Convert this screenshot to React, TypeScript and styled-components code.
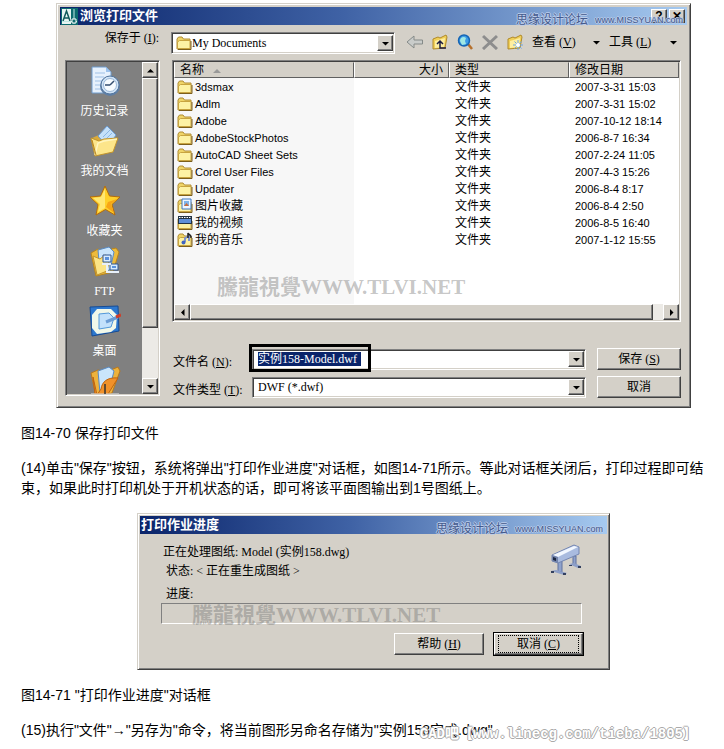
import React from "react";
import styled, { createGlobalStyle, css } from "styled-components";

const GlobalStyle = createGlobalStyle`
  *, *::before, *::after { box-sizing: border-box; }
  body { margin: 0; background: #fff; color: #000; }
  button, input, select { font: inherit; color: inherit; margin: 0; border-radius: 0; }
`;

const ui = `"Liberation Serif", "Noto Sans CJK SC", serif`;
const sans = `"Liberation Sans", "Noto Sans CJK SC", sans-serif`;
const face = "#d4d0c8";

const raised = css`
  border: 1px solid;
  border-color: #fff #404040 #404040 #fff;
  box-shadow: inset -1px -1px 0 #808080;
`;
const sunken = css`
  padding: 1px;
  border: 1px solid;
  border-color: #808080 #fff #fff #808080;
  box-shadow: inset 1px 1px 0 #404040, inset -1px -1px 0 ${face};
`;

const Article = styled.main`
  display: flex;
  flex-direction: column;
  gap: 15px;
  padding: 3px 12px 10px 21px;
  font: 14px/20px ${sans};
`;
const Paragraph = styled.p`
  position: relative;
  margin: 0;
`;
const Figure = styled.figure<{ $max: number }>`
  width: 100%;
  max-width: ${(p) => p.$max + 14}px;
  margin: 0 auto;
  padding-left: 14px;
`;
const Dialog = styled.section`
  padding: 2px;
  background: ${face};
  border: 1px solid;
  border-color: ${face} #404040 #404040 ${face};
  box-shadow: inset 1px 1px 0 #fff, inset -1px -1px 0 #808080;
  font: 12px/16px ${ui};
`;
const DialogFrame = styled.div`
  border: 1px solid ${face};
`;
const TitleBar = styled.header`
  position: relative;
  display: flex;
  align-items: center;
  gap: 2px;
  height: 18px;
  padding: 0 2px 0 1px;
  background: linear-gradient(90deg, #0a246a, #3f62a5 45%, #a6caf0);
`;
const Title = styled.h2`
  flex: 1;
  margin: 0;
  color: #fff;
  font: bold 13px/18px ${sans};
`;
const CaptionButton = styled.button`
  width: 16px;
  height: 14px;
  padding: 0;
  background: ${face};
  font: bold 12px/12px ${sans};
  ${raised}
`;
const SiteMark = styled.span`
  position: absolute;
  right: 4px;
  bottom: -4px;
  display: flex;
  align-items: center;
  gap: 7px;
  color: #44598c;
  font: 12px/18px ${sans};
  text-shadow: 1px 0 #bccdea, -1px 0 #bccdea, 0 1px #bccdea, 0 -1px #bccdea;
  pointer-events: none;
`;
const SiteUrl = styled.small`
  font: 9px/18px ${sans};
`;
const Watermark = styled.div<{ $left: number; $bottom: number }>`
  position: absolute;
  left: ${(p) => p.$left}px;
  bottom: ${(p) => p.$bottom}px;
  color: rgba(110, 110, 110, 0.4);
  font: bold 21px/24px "Liberation Serif", "Noto Sans CJK TC", serif;
  white-space: nowrap;
  pointer-events: none;
`;

const BrowseBody = styled.div`
  padding: 7px 6px 6px 5px;
`;
const Toolbar = styled.div`
  display: flex;
  align-items: flex-start;
  margin-bottom: 6px;
`;
const LookInLabel = styled.label`
  width: 94px;
  margin-right: 12px;
  line-height: 12px;
  text-align: right;
`;
const Combo = styled.div`
  display: flex;
  align-items: center;
  flex: 1;
  min-width: 0;
  height: 22px;
  background: #fff;
  ${sunken}
  padding-left: 4px;
`;
const FieldCombo = styled(Combo)`
  position: relative;
  height: 21px;
  padding-left: 5px;
`;
const PlainSelect = styled.select`
  flex: 1;
  min-width: 0;
  height: 16px;
  padding: 0;
  border: 0;
  outline: 0;
  background: transparent;
  appearance: none;
`;
const NameInput = styled.input`
  width: 103px;
  height: 14px;
  padding: 0;
  border: 0;
  outline: 0;
  background: #0a246a;
  color: #fff;
`;
const Grow = styled.span`
  flex: 1;
`;
const ArrowButton = styled.button`
  display: grid;
  place-items: center;
  flex: none;
  width: 16px;
  height: 16px;
  padding: 0;
  background: ${face};
  ${raised}
`;
const Highlight = styled.div`
  position: absolute;
  top: -6px;
  left: -4px;
  width: 122px;
  height: 28px;
  border: 3px solid #000;
  pointer-events: none;
`;
const Tools = styled.div`
  display: flex;
  align-items: center;
  padding-left: 7px;
`;
const ToolButton = styled.button`
  display: grid;
  place-items: center;
  width: 25px;
  height: 20px;
  padding: 0;
  border: 0;
  background: none;
`;
const MenuButton = styled.button`
  display: flex;
  align-items: center;
  justify-content: space-between;
  width: 68px;
  margin: 0 4px 0 5px;
  padding: 0;
  border: 0;
  background: none;
  white-space: nowrap;
`;

const Main = styled.div`
  display: flex;
  gap: 12px;
`;
const Places = styled.nav`
  display: flex;
  flex: none;
  width: 95px;
  margin-bottom: 2px;
  background: #808080;
  ${sunken}
`;
const PlaceList = styled.div`
  flex: 1;
  overflow: hidden;
  contain: size;
`;
const Place = styled.button`
  display: flex;
  flex-direction: column;
  align-items: center;
  gap: 6px;
  width: 100%;
  height: 60px;
  padding: 3px 0;
  border: 0;
  background: none;
  color: #fff;
`;
const VScroll = styled.div`
  display: flex;
  flex-direction: column;
  width: 16px;
  background: #eceae6;
`;
const HScroll = styled.div`
  display: flex;
  height: 16px;
  background: #eceae6;
`;
const Thumb = styled.div<{ $grow: number }>`
  flex: ${(p) => p.$grow};
  background: ${face};
  ${raised}
`;
const Track = styled.div<{ $grow: number }>`
  flex: ${(p) => p.$grow};
`;

const Content = styled.div`
  flex: 1;
  min-width: 0;
`;
const FileList = styled.div`
  position: relative;
  ${sunken}
`;
const Viewport = styled.div`
  min-height: 242px;
  background: linear-gradient(90deg, #f7f7f7 180px, #fff 180px);
`;
const FileTable = styled.table`
  width: 100%;
  table-layout: fixed;
  border-collapse: separate;
  border-spacing: 0;
  text-align: left;
`;
const HeadCell = styled.th<{ $width?: number; $right?: boolean }>`
  width: ${(p) => (p.$width ? p.$width + "px" : "auto")};
  height: 16px;
  padding: 0 5px;
  background: ${face};
  border: 1px solid;
  border-color: ${face} #606060 #606060 #fff;
  font-weight: normal;
  line-height: 14px;
  text-align: ${(p) => (p.$right ? "right" : "left")};
`;
const SortMark = styled.span`
  display: inline-block;
  margin-left: 9px;
  vertical-align: middle;
  border: 4px solid transparent;
  border-top: 0;
  border-bottom-color: #999;
`;
const Cell = styled.td<{ $small?: boolean }>`
  height: 17px;
  padding: 0 6px;
  font: ${(p) => (p.$small ? 11 : 12)}px/16px ${sans};
  white-space: nowrap;
`;
const FileName = styled.span`
  display: flex;
  align-items: center;
  gap: 2px;
  margin-left: -3px;
`;

const Fields = styled.div`
  display: grid;
  grid-template-columns: 69px 1fr 84px;
  column-gap: 11px;
  row-gap: 6px;
  align-items: center;
  margin-top: 26px;
`;
const FieldLabel = styled.label`
  padding: 5px 0 0 1px;
  white-space: nowrap;
`;
const PushButton = styled.button<{ $default?: boolean }>`
  height: 22px;
  padding: 0;
  background: ${face};
  line-height: 16px;
  ${raised}
  ${(p) =>
    p.$default &&
    css`
      outline: 1px solid #000;
    `}
`;
const FocusBox = styled.span`
  display: block;
  margin: 0 3px;
  border: 1px dotted #000;
`;

const ProgressBody = styled.div`
  padding: 10px 25px 12px 21px;
`;
const StatusRow = styled.div`
  display: flex;
  align-items: flex-start;
  justify-content: space-between;
  padding-left: 2px;
`;
const StatusLine = styled.p<{ $indent?: number }>`
  margin: 0 0 3px ${(p) => p.$indent ?? 0}px;
`;
const ProgressLabel = styled.div`
  margin: 4px 0 1px 5px;
`;
const ProgressBar = styled.div`
  position: relative;
  height: 21px;
  border: 1px solid;
  border-color: #808080 #fff #fff #808080;
`;
const Actions = styled.div`
  display: grid;
  grid-template-columns: 90px 89px;
  justify-content: end;
  gap: 10px;
  margin: 9px -1px 0 0;
`;
const ForumMark = styled.span`
  position: absolute;
  right: 15px;
  top: 4px;
  color: #fff;
  font: bold 14px/20px "Liberation Mono", "Noto Sans CJK SC", monospace;
  text-shadow: 1px 0 #aaa, -1px 0 #aaa, 0 1px #aaa, 0 -1px #aaa;
  white-space: nowrap;
  pointer-events: none;
`;

type Dir = "up" | "down" | "left" | "right";
const arrows: Record<Dir, string> = {
  up: "M0 5.5h7L3.5 2z",
  down: "M0 2h7L3.5 5.5z",
  left: "M5.5 0v7L2 3.5z",
  right: "M2 0v7l3.5-3.5z",
};
const Arrow = ({ dir = "down" }: { dir?: Dir }) => (
  <svg width="7" height="7" aria-hidden="true">
    <path d={arrows[dir]} />
  </svg>
);

const FolderShape = () => (
  <>
    <path d="M1 4l1.500-2H6l1.500 2H14v10H1z" fill="#efd468" stroke="#b08c34" />
    <path d="M1.500 13.500V7l2-1.500H14v8z" fill="#fdf2a4" stroke="#c8a440" />
    <path d="M15 6v8.500H2" stroke="#7c5f1c" fill="none" />
  </>
);

type Kind = "folder" | "picture" | "video" | "music";
const FileIcon = ({ kind }: { kind: Kind }) => (
  <svg width="16" height="16" viewBox="0 0 16 16" aria-hidden="true">
    <FolderShape />
    {kind === "picture" && (
      <>
        <path d="M5 1h9v10H5z" fill="#eef6ff" stroke="#3f78c0" />
        <path d="M7 3h5v5H7z" fill="#7fb4ea" />
        <path d="M7 8l2.500-3L12 8z" fill="#c66a3c" />
      </>
    )}
    {kind === "video" && (
      <>
        <path d="M1 1h14v8H1z" fill="#234" />
        <path d="M2 2.500h12" stroke="#fff" strokeDasharray="1.500 1" />
        <path d="M2 4h12v4H2z" fill="#5e8fd8" />
      </>
    )}
    {kind === "music" && (
      <>
        <path d="M8 10V6l4-2v5" stroke="#7f93cc" strokeWidth="2" fill="none" />
        <circle cx="6.500" cy="10.500" r="2" fill="#4064c0" />
        <path d="M11 6V1c1 2 4 2 3 5" stroke="#222" strokeWidth="1.500" fill="none" />
      </>
    )}
  </svg>
);

const AppIcon = () => (
  <svg width="17" height="17" viewBox="0 0 17 17" aria-hidden="true">
    <path d="M0 0h17v17H0z" fill="#0c6a6e" />
    <path d="M1 1h9v15H1z" fill="#e8f4f2" />
    <path d="M2 13L5.500 3 9 13M3 10h5" stroke="#10595c" strokeWidth="1.500" fill="none" />
    <path d="M13 1v15M1 13.500h15" stroke="#bfe8e4" />
    <path d="M11 11h4v4h-4z" fill="#0c6a6e" stroke="#fff" />
  </svg>
);

const HistoryIcon = () => (
  <>
    <path d="M3 2h14l5 5v21H3z" fill="#e6f1fd" stroke="#6f9cce" />
    <path d="M17 2v5h5z" fill="#9dc2ec" />
    <path d="M6 8h10M6 12h9M6 16h7M6 20h5M6 24h6" stroke="#9fc0e6" />
    <circle cx="21" cy="21" r="10" fill="#5f7fa6" />
    <circle cx="21" cy="20" r="9" fill="#cfe2f5" stroke="#55779e" />
    <circle cx="21" cy="20" r="6.500" fill="#f6fbff" stroke="#9ab8d8" />
    <path d="M21 20l4-4M21 20h-5" stroke="#334e70" strokeWidth="1.500" />
  </>
);
const DocumentsIcon = () => (
  <>
    <path d="M3 13l9-4 16 4-5 9z" fill="#d9a93a" />
    <path d="M9 11L18 1l9 9-8 12z" fill="#c4e0fa" stroke="#6c9cd2" />
    <path d="M14 12l7-7M16 15l7-7" stroke="#8ab6e4" />
    <path d="M2 13l8 3 5-2 14-1-5 14-18 4z" fill="#fce58a" stroke="#c4952a" />
    <path d="M6 30l3-12 6-2 13-2" fill="none" stroke="#fff5bf" strokeWidth="1.500" />
    <path d="M3 15l4 15" stroke="#b8841d" />
  </>
);
const StarIcon = () => (
  <>
    <path d="M16 1l4.500 10L31 12l-8 7.500L26 30l-9.500-5.500L7 30l2-10.500L1 12l10.500-1z" fill="#ffd02a" stroke="#b46b0c" />
    <path d="M16 4v19L9 27l2-8-7-6 8-1z" fill="#ffef8e" opacity=".75" />
    <path d="M17 22l8 6-3-9 6-5-9 3z" fill="#f59a12" opacity=".8" />
  </>
);
const FtpIcon = () => (
  <>
    <path d="M2 8l7-4 5 2 13-3 3 4-6 20-17 4z" fill="#edbb3c" stroke="#b9851c" />
    <path d="M9 5l11-3 5 5-4 18-10 2z" fill="#cae5fb" stroke="#598bc4" />
    <path d="M4 11l7 3 5-4 5 2-3 14-10 4z" fill="#fbe486" stroke="#c4962e" />
    <path d="M14 10h8v7h-8zM21 19h8v6h-8z" fill="#d8ecff" stroke="#31568f" />
    <path d="M13 19h9M19 27h11M18 19v8h3" stroke="#e8f0fa" strokeWidth="2" fill="none" />
    <path d="M16 12h4v3h-4zM23 21h4v2h-4z" fill="#5b92dc" />
  </>
);
const DesktopIcon = () => (
  <>
    <path d="M1 2l28-1 1 25-27 5z" fill="#2d78cf" stroke="#164b94" />
    <path d="M8 4h14l6 6-1 13-5 4-14 2-5-6V10z" fill="#f1f8ea" />
    <path d="M10 9l10-1 5 5-3 9-12 2z" fill="#c2e1fb" stroke="#5299da" />
    <path d="M17 17l12-5" stroke="#6a9cd4" strokeWidth="3" />
    <path d="M27 12l5-2" stroke="#cf3d28" strokeWidth="3" />
  </>
);
const BuzzsawIcon = () => (
  <>
    <path d="M2 8l7-3 8 2 12-5 2 4-8 22-16 4z" fill="#edb23c" stroke="#b9781c" />
    <path d="M9 6l11-4 5 4-5 20-9 2z" fill="#cae5fb" stroke="#598bc4" />
    <path d="M4 12l4 18 4-6c1-7 6-12 17-11L19 29H6z" fill="#f0912a" stroke="#bd6412" />
    <path d="M2 29h28" stroke="#e8e8e8" />
    <path d="M16 19v10" stroke="#333" strokeWidth="1.500" />
  </>
);

const places: [string, () => React.ReactElement][] = [
  ["历史记录", HistoryIcon],
  ["我的文档", DocumentsIcon],
  ["收藏夹", StarIcon],
  ["FTP", FtpIcon],
  ["桌面", DesktopIcon],
  ["Buzzsaw", BuzzsawIcon],
];

const files: [string, string, Kind][] = [
  ["3dsmax", "2007-3-31 15:03", "folder"],
  ["Adlm", "2007-3-31 15:02", "folder"],
  ["Adobe", "2007-10-12 18:14", "folder"],
  ["AdobeStockPhotos", "2006-8-7 16:34", "folder"],
  ["AutoCAD Sheet Sets", "2007-2-24 11:05", "folder"],
  ["Corel User Files", "2007-4-3 15:26", "folder"],
  ["Updater", "2006-8-4 8:17", "folder"],
  ["图片收藏", "2006-8-4 2:50", "picture"],
  ["我的视频", "2006-8-5 16:40", "video"],
  ["我的音乐", "2007-1-12 15:55", "music"],
];

const toolIcons: [string, React.ReactNode][] = [
  ["后退", <path key="a" d="M0 8l7-6v4h8.500v4H7v4z" fill="#c9ccca" stroke="#858a88" />],
  [
    "向上一级",
    <g key="b">
      <path d="M1 5l5-2 2 1 6-3 1 2-2 11-12 1z" fill="#f0cf58" stroke="#b08a2a" />
      <path d="M3 7l10-3-1 9-9 1z" fill="#fdeea0" />
      <path d="M14 14H8V7M5 10l3-3 3 3" stroke="#1c1c40" strokeWidth="1.500" fill="none" />
    </g>,
  ],
  [
    "搜索 Web",
    <g key="c">
      <path d="M11 10l4 5" stroke="#b5702c" strokeWidth="2.500" />
      <circle cx="7" cy="6.500" r="5.500" fill="#3c9be6" stroke="#1565b4" strokeWidth="1.500" />
      <path d="M3 7c0-4 4-5 6-3L8 7l1 3-4 1z" fill="#9fe8e4" />
    </g>,
  ],
  ["删除", <path key="d" d="M1 2l14 13M15 2L1 15" stroke="#8d8d8d" strokeWidth="3" />],
  [
    "新建文件夹",
    <g key="e">
      <path d="M1 5l5-2 2 1 6-3 1 2-2 11-12 1z" fill="#f0cf58" stroke="#b08a2a" />
      <path d="M3 7l10-3-1 9-9 1z" fill="#fdeea0" />
      <path d="M11 6v10M6 11h10M7.500 7.500l7 7M14.500 7.500l-7 7" stroke="#6aa6e4" />
      <circle cx="11" cy="11" r="2" fill="#fff" />
    </g>,
  ],
];

const PlotterIcon = () => (
  <svg width="32" height="32" viewBox="0 0 32 32" aria-hidden="true">
    <path d="M8 17h4v11H8zM23 12h3v9h-3z" fill="#8fa2cc" stroke="#60739f" />
    <path d="M1 27l5-1 11 3-3 2zM19 20l5-1 7 3-3 2z" fill="#8d9fc8" />
    <path d="M1 27h3v2H1zM13 29h3v2h-3zM19 21h3v1h-3zM28 22h3v2h-3z" fill="#33405f" />
    <path d="M2 11L24 1l5 2v7L8 19l-6-2z" fill="#a9bbdf" stroke="#7587b2" />
    <path d="M3 11L24 2l4 1L8 13z" fill="#f2f7ff" />
    <path d="M2 11l6 2v6l-6-2z" fill="#7283aa" />
    <path d="M3 13l3 1v3l-3-1z" fill="#1b2743" />
  </svg>
);

const SiteBadge = () => (
  <SiteMark>
    思缘设计论坛<SiteUrl>www.MISSYUAN.com</SiteUrl>
  </SiteMark>
);

export default function App() {
  return (
    <Article>
      <GlobalStyle />
      <Figure $max={635}>
        <Dialog aria-label="浏览打印文件">
          <DialogFrame>
            <TitleBar>
              <AppIcon />
              <Title>浏览打印文件</Title>
              <CaptionButton aria-label="帮助">?</CaptionButton>
              <CaptionButton aria-label="关闭">✕</CaptionButton>
              <SiteBadge />
            </TitleBar>
            <BrowseBody>
              <Toolbar>
                <LookInLabel htmlFor="look-in">
                  保存于 (<u>I</u>):
                </LookInLabel>
                <Combo>
                  <FileIcon kind="folder" />
                  <PlainSelect id="look-in">
                    <option>My Documents</option>
                  </PlainSelect>
                  <ArrowButton tabIndex={-1} aria-label="展开位置">
                    <Arrow />
                  </ArrowButton>
                </Combo>
                <Tools>
                  {toolIcons.map(([name, drawing]) => (
                    <ToolButton key={name} aria-label={name}>
                      <svg width="16" height="16" viewBox="0 0 16 16" fill="none">
                        {drawing}
                      </svg>
                    </ToolButton>
                  ))}
                  <MenuButton>
                    <span>
                      查看 (<u>V</u>)
                    </span>
                    <Arrow />
                  </MenuButton>
                  <MenuButton>
                    <span>
                      工具 (<u>L</u>)
                    </span>
                    <Arrow />
                  </MenuButton>
                </Tools>
              </Toolbar>
              <Main>
                <Places aria-label="位置">
                  <PlaceList>
                    {places.map(([name, Icon]) => (
                      <Place key={name}>
                        <svg width="32" height="32" viewBox="0 0 32 32" fill="none" aria-hidden="true">
                          <Icon />
                        </svg>
                        {name === "Buzzsaw" ? null : name}
                      </Place>
                    ))}
                  </PlaceList>
                  <VScroll>
                    <ArrowButton aria-label="向上滚动">
                      <Arrow dir="up" />
                    </ArrowButton>
                    <Thumb $grow={5} />
                    <Track $grow={1} />
                    <ArrowButton aria-label="向下滚动">
                      <Arrow />
                    </ArrowButton>
                  </VScroll>
                </Places>
                <Content>
                  <FileList>
                    <Viewport>
                      <FileTable>
                        <thead>
                          <tr>
                            <HeadCell $width={180}>
                              名称
                              <SortMark />
                            </HeadCell>
                            <HeadCell $width={95} $right>
                              大小
                            </HeadCell>
                            <HeadCell $width={120}>类型</HeadCell>
                            <HeadCell>修改日期</HeadCell>
                          </tr>
                        </thead>
                        <tbody>
                          {files.map(([name, date, kind]) => (
                            <tr key={name}>
                              <Cell $small={kind === "folder"}>
                                <FileName>
                                  <FileIcon kind={kind} />
                                  {name}
                                </FileName>
                              </Cell>
                              <Cell />
                              <Cell>文件夹</Cell>
                              <Cell $small>{date}</Cell>
                            </tr>
                          ))}
                        </tbody>
                      </FileTable>
                    </Viewport>
                    <HScroll>
                      <ArrowButton aria-label="向左滚动">
                        <Arrow dir="left" />
                      </ArrowButton>
                      <Thumb $grow={46} />
                      <Track $grow={1} />
                      <ArrowButton aria-label="向右滚动">
                        <Arrow dir="right" />
                      </ArrowButton>
                    </HScroll>
                    <Watermark $left={44} $bottom={22}>
                      騰龍視覺WWW.TLVI.NET
                    </Watermark>
                  </FileList>
                  <Fields>
                    <FieldLabel htmlFor="file-name">
                      文件名 (<u>N</u>):
                    </FieldLabel>
                    <FieldCombo>
                      <NameInput id="file-name" defaultValue="实例158-Model.dwf" />
                      <Grow />
                      <ArrowButton tabIndex={-1} aria-label="展开文件名">
                        <Arrow />
                      </ArrowButton>
                      <Highlight />
                    </FieldCombo>
                    <PushButton>
                      保存 (<u>S</u>)
                    </PushButton>
                    <FieldLabel htmlFor="file-type">
                      文件类型 (<u>T</u>):
                    </FieldLabel>
                    <FieldCombo>
                      <PlainSelect id="file-type">
                        <option>DWF (*.dwf)</option>
                      </PlainSelect>
                      <ArrowButton tabIndex={-1} aria-label="展开文件类型">
                        <Arrow />
                      </ArrowButton>
                    </FieldCombo>
                    <PushButton>取消</PushButton>
                  </Fields>
                </Content>
              </Main>
            </BrowseBody>
          </DialogFrame>
        </Dialog>
      </Figure>
      <Paragraph>图14-70 保存打印文件</Paragraph>
      <Paragraph>
        (14)单击"保存"按钮，系统将弹出"打印作业进度"对话框，如图14-71所示。等此对话框关闭后，打印过程即可结束，如果此时打印机处于开机状态的话，即可将该平面图输出到1号图纸上。
      </Paragraph>
      <Figure $max={473}>
        <Dialog aria-label="打印作业进度">
          <TitleBar>
            <Title>打印作业进度</Title>
            <SiteBadge />
          </TitleBar>
          <ProgressBody>
            <StatusRow>
              <div>
                <StatusLine>正在处理图纸: Model (实例158.dwg)</StatusLine>
                <StatusLine $indent={3}>状态: &lt; 正在重生成图纸 &gt;</StatusLine>
              </div>
              <PlotterIcon />
            </StatusRow>
            <ProgressLabel id="progress-label">进度:</ProgressLabel>
            <ProgressBar role="progressbar" aria-labelledby="progress-label" aria-valuenow={0}>
              <Watermark $left={30} $bottom={-4}>
                騰龍視覺WWW.TLVI.NET
              </Watermark>
            </ProgressBar>
            <Actions>
              <PushButton>
                帮助 (<u>H</u>)
              </PushButton>
              <PushButton $default>
                <FocusBox>
                  取消 (<u>C</u>)
                </FocusBox>
              </PushButton>
            </Actions>
          </ProgressBody>
        </Dialog>
      </Figure>
      <Paragraph>图14-71 "打印作业进度"对话框</Paragraph>
      <Paragraph>
        (15)执行"文件"→"另存为"命令，将当前图形另命名存储为"实例158完成.dwg"
        <ForumMark>CAD吧【www.linecg.com/tieba/1805】</ForumMark>
      </Paragraph>
    </Article>
  );
}
